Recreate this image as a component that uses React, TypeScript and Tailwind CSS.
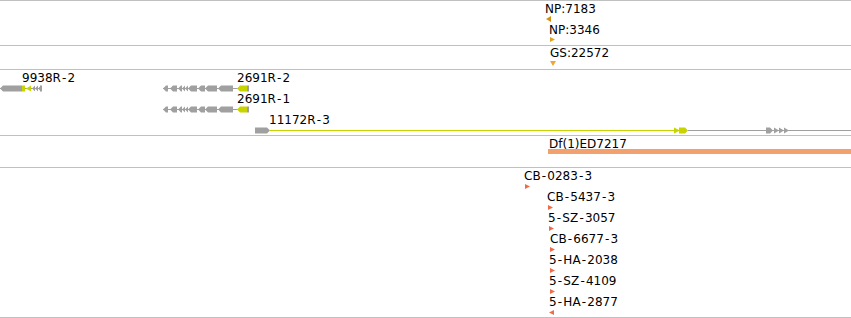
import { Fragment } from 'react';

const GRAY = '#a0a0a0';
const YEL = '#c8d400';

// left-pointing exon (minus strand)
const lex = (x1: number, x2: number, c: number, h = 6) =>
  `${x1},${c} ${x1 + 3},${c - h / 2} ${x2},${c - h / 2} ${x2},${c + h / 2} ${x1 + 3},${c + h / 2}`;

// right-pointing exon (plus strand)
const rex = (x1: number, x2: number, c: number, h = 6) =>
  `${x1},${c - h / 2} ${x2 - 3},${c - h / 2} ${x2},${c} ${x2 - 3},${c + h / 2} ${x1},${c + h / 2}`;

const triR = (x: number, y: number, w = 5, h = 5) => `${x},${y} ${x + w},${y + h / 2} ${x},${y + h}`;
const triL = (x: number, y: number, w = 5, h = 6) => `${x},${y + h / 2} ${x + w},${y} ${x + w},${y + h}`;

const Name = ({ t }: { t: string }) => (
  <>
    {t.split('-').map((s, i) =>
      i ? (
        <Fragment key={i}>
          <span className="px-[1.2px]">-</span>
          {s}
        </Fragment>
      ) : (
        <Fragment key={i}>{s}</Fragment>
      )
    )}
  </>
);

const Gene2691 = ({ c }: { c: number }) => {
  const parts: [number, number][] = [
    [163, 168], [170, 177], [178, 182], [182, 185], [185, 188],
    [188, 197], [198, 205], [205, 217], [218, 233],
  ];
  return (
    <g>
      <rect x={163} y={c - 0.5} width={86} height={1} fill={GRAY} />
      {parts.map(([a, b]) => (
        <polygon key={a} points={lex(a, b, c)} fill={GRAY} />
      ))}
      <polygon points={lex(237, 247, c)} fill={YEL} />
      <rect x={247} y={c - 3} width={2} height={6} fill={GRAY} />
    </g>
  );
};

export default function App() {
  return (
    <div className="w-[851px] bg-white border-t border-[#c0c0c0] font-['DejaVu_Sans',sans-serif] text-[12px] leading-[14px] text-black">
      {/* protein hits */}
      <div className="relative h-[45px] border-b border-[#c0c0c0]">
        <span className="absolute left-[545px] top-[1px] whitespace-nowrap">NP:7183</span>
        <span className="absolute left-[549px] top-[22px] whitespace-nowrap">NP:3346</span>
        <svg className="absolute inset-0" width="851" height="44">
          <polygon points={triL(546, 15)} fill="#d4920c" />
          <polygon points={triR(550, 36)} fill="#e3a01c" />
        </svg>
      </div>

      {/* GS */}
      <div className="relative h-[24px] border-b border-[#c0c0c0]">
        <span className="absolute left-[550px] top-0 whitespace-nowrap">GS:22572</span>
        <svg className="absolute inset-0" width="851" height="23">
          <polygon points="550,15 556,15 553,20" fill="#f0a630" />
        </svg>
      </div>

      {/* gene models */}
      <div className="relative h-[66px] border-b border-[#c0c0c0]">
        <svg className="absolute inset-0" width="851" height="65">
          <rect x={0} y={18} width={42} height={1} fill={GRAY} />
          <polygon points={lex(0, 22, 18.5)} fill={GRAY} />
          <rect x={22} y={15.5} width={3} height={6} fill={YEL} />
          <polygon points="26,18.5 31,15.5 31,21.5" fill={YEL} />
          <polygon points="32,18.5 35,15.5 35,21.5" fill={GRAY} />
          <polygon points="35,18.5 38,15.5 38,21.5" fill={GRAY} />
          <polygon points="38,18.5 41,15.5 41,21.5" fill={GRAY} />
          <rect x={40} y={15.5} width={2} height={6} fill={GRAY} />

          <Gene2691 c={18.5} />
          <Gene2691 c={39.5} />

          <polygon points={rex(255, 270, 60.5)} fill={GRAY} />
          <rect x={270} y={60} width={406} height={1} fill={YEL} />
          <polygon points="674,57.5 680,60.5 674,63.5" fill={YEL} />
          <polygon points={rex(679, 688, 60.5)} fill={YEL} />
          <rect x={688} y={60} width={163} height={1} fill={GRAY} />
          <polygon points={rex(766, 773, 60.5)} fill={GRAY} />
          <polygon points="774,57.5 779,60.5 774,63.5" fill={GRAY} />
          <polygon points="779,57.5 784,60.5 779,63.5" fill={GRAY} />
          <polygon points="784,57.5 789,60.5 784,63.5" fill={GRAY} />
        </svg>
        <span className="absolute left-[22px] top-[1px] whitespace-nowrap"><Name t="9938R-2" /></span>
        <span className="absolute left-[237px] top-[1px] whitespace-nowrap"><Name t="2691R-2" /></span>
        <span className="absolute left-[237px] top-[22px] whitespace-nowrap"><Name t="2691R-1" /></span>
        <span className="absolute left-[269px] top-[43px] whitespace-nowrap"><Name t="11172R-3" /></span>
      </div>

      {/* deficiency */}
      <div className="relative h-[32px] border-b border-[#c0c0c0]">
        <span className="absolute left-[549px] top-[1px] whitespace-nowrap">Df(1)ED7217</span>
        <div className="absolute left-[548px] right-0 top-[13px] h-[5px] bg-[#f2a06e]" />
      </div>

      {/* insertions */}
      <div className="relative h-[150px] border-b border-[#c0c0c0]">
        <span className="absolute left-[524px] top-[1px] whitespace-nowrap"><Name t="CB-0283-3" /></span>
        <span className="absolute left-[547px] top-[22px] whitespace-nowrap"><Name t="CB-5437-3" /></span>
        <span className="absolute left-[548px] top-[43px] whitespace-nowrap"><Name t="5-SZ-3057" /></span>
        <span className="absolute left-[550px] top-[64px] whitespace-nowrap"><Name t="CB-6677-3" /></span>
        <span className="absolute left-[549px] top-[85px] whitespace-nowrap"><Name t="5-HA-2038" /></span>
        <span className="absolute left-[549px] top-[106px] whitespace-nowrap"><Name t="5-SZ-4109" /></span>
        <span className="absolute left-[549px] top-[127px] whitespace-nowrap"><Name t="5-HA-2877" /></span>
        <svg className="absolute inset-0" width="851" height="149">
          <polygon points={triR(525, 16)} fill="#f26a48" />
          <polygon points={triR(548, 37)} fill="#f26a48" />
          <polygon points={triR(549, 58)} fill="#f26a48" />
          <polygon points={triR(550, 79)} fill="#f26a48" />
          <polygon points={triR(550, 100)} fill="#f26a48" />
          <polygon points={triR(550, 121)} fill="#f26a48" />
          <polygon points={triL(549, 142, 5, 5)} fill="#f26a48" />
        </svg>
      </div>
    </div>
  );
}
